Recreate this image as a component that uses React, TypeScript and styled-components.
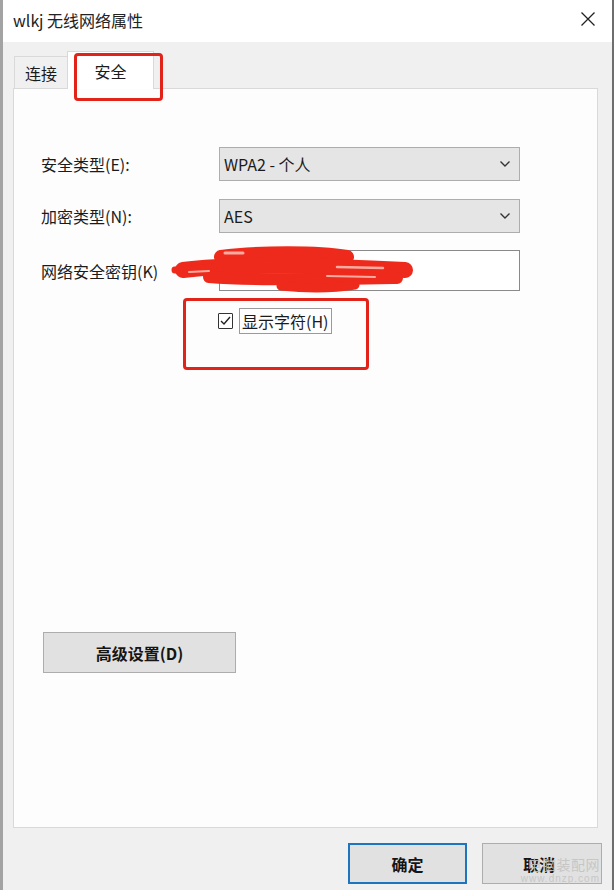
import React from "react";
import styled, { createGlobalStyle } from "styled-components";

const GlobalStyle = createGlobalStyle`
  html, body {
    margin: 0;
    padding: 0;
    background: #f0f0f0;
  }
  body {
    font-family: "Noto Sans CJK SC", "Noto Sans", sans-serif;
    color: #1b1b1b;
  }
  * {
    box-sizing: border-box;
  }
`;

const Window = styled.div`
  position: relative;
  width: 614px;
  height: 890px;
  display: flex;
  flex-direction: column;
  background: #f0f0f0;
  border-left: 3px solid #a3a3a3;
  border-right: 2px solid #6e6e6e;
  overflow: hidden;
`;

const TitleBar = styled.div`
  height: 42px;
  flex-shrink: 0;
  display: flex;
  align-items: center;
  justify-content: space-between;
  padding: 0 14px 2px 10px;
  background: #ffffff;
`;

const Title = styled.span`
  font-size: 16px;
  color: #222;
`;

const CloseButton = styled.div`
  width: 20px;
  height: 20px;
  display: flex;
  align-items: center;
  justify-content: center;
  margin-top: -2px;
`;

const Body = styled.div`
  flex: 1;
  display: flex;
  flex-direction: column;
  padding: 0 14px 0 10px;
`;

const TabRow = styled.div`
  height: 46px;
  display: flex;
  align-items: flex-end;
  padding-left: 1px;
`;

const Tab = styled.div<{ $active?: boolean }>`
  position: relative;
  z-index: ${(p) => (p.$active ? 2 : 1)};
  width: ${(p) => (p.$active ? "87px" : "54px")};
  height: ${(p) => (p.$active ? "38px" : "32px")};
  margin-bottom: ${(p) => (p.$active ? "-1px" : "0")};
  padding-top: ${(p) => (p.$active ? "9px" : "6px")};
  text-align: center;
  font-size: 16px;
  line-height: 20px;
  background: ${(p) => (p.$active ? "#ffffff" : "#f0f0f0")};
  border: 1px solid #d9d9d9;
  border-bottom: none;
  margin-right: ${(p) => (p.$active ? "0" : "-1px")};
`;

const Panel = styled.div`
  flex: 1;
  display: flex;
  flex-direction: column;
  background: #fdfdfd;
  border: 1px solid #d9d9d9;
  padding: 58px 0 154px 27px;
`;

const FormGrid = styled.div`
  display: grid;
  grid-template-columns: 178px 301px;
  grid-auto-rows: auto;
  row-gap: 18px;
  align-items: center;
`;

const Label = styled.label`
  font-size: 16px;
  line-height: 20px;
  white-space: nowrap;
`;

const SelectBox = styled.div`
  height: 34px;
  display: flex;
  align-items: center;
  justify-content: space-between;
  padding: 0 8px 0 4px;
  background: #e5e5e5;
  border: 1px solid #adadad;
  font-size: 16px;
`;

const TextBox = styled.div`
  height: 41px;
  margin-top: -1px;
  background: #ffffff;
  border: 1px solid #8a8a8a;
`;

const CheckRow = styled.div`
  grid-column: 2;
  display: flex;
  align-items: center;
  gap: 6px;
  margin-top: -1px;
  margin-left: -1px;
`;

const CheckBox = styled.div`
  width: 15px;
  height: 16px;
  border: 1.5px solid #333;
  border-radius: 1px;
  background: #fff;
  display: flex;
  align-items: center;
  justify-content: center;
`;

const FocusLabel = styled.span`
  height: 26px;
  padding: 0 3px 0 2px;
  display: flex;
  align-items: center;
  border: 1px solid #9a9a9a;
  font-size: 16px;
`;

const PushButton = styled.div<{ $primary?: boolean; $width: number }>`
  width: ${(p) => p.$width}px;
  height: 41px;
  display: flex;
  align-items: center;
  justify-content: center;
  background: #e1e1e1;
  border: ${(p) => (p.$primary ? "2px solid #1f74c0" : "1px solid #adadad")};
  font-size: 16px;
  font-weight: 700;
  color: #151515;
`;

const AdvancedButton = styled(PushButton)`
  margin-top: auto;
  margin-left: 2px;
`;

const CancelButton = styled(PushButton)`
  justify-content: flex-start;
  padding-left: 40px;
`;

const Footer = styled.div`
  height: 62px;
  flex-shrink: 0;
  display: flex;
  justify-content: flex-end;
  align-items: flex-start;
  gap: 15px;
  padding: 15px 10px 0 0;
  margin-right: -14px;
`;

const Annotation = styled.div<{ $x: number; $y: number; $w: number; $h: number }>`
  position: absolute;
  left: ${(p) => p.$x}px;
  top: ${(p) => p.$y}px;
  width: ${(p) => p.$w}px;
  height: ${(p) => p.$h}px;
  border: 3px solid #e2231a;
  border-radius: 4px;
  z-index: 5;
  pointer-events: none;
`;

const Scribble = styled.svg`
  position: absolute;
  left: 166px;
  top: 246px;
  z-index: 4;
`;

const Watermark = styled.div`
  position: absolute;
  right: 12px;
  bottom: 6px;
  z-index: 6;
  text-align: right;
  color: rgba(195, 195, 195, 0.9);
  line-height: 1;
`;

const WatermarkTitle = styled.div`
  font-size: 14px;
  letter-spacing: 0.5px;
  margin-bottom: 3px;
`;

const WatermarkUrl = styled.div`
  font-family: "Liberation Sans", sans-serif;
  font-size: 10px;
  letter-spacing: 1px;
`;

const Chevron = () => (
  <svg width="12" height="8" viewBox="0 0 12 8">
    <polyline points="1.5,1.5 6,6 10.5,1.5" fill="none" stroke="#333" strokeWidth="1.4" />
  </svg>
);

export default function App() {
  return (
    <>
      <GlobalStyle />
      <Window>
        <TitleBar>
          <Title>wlkj 无线网络属性</Title>
          <CloseButton>
            <svg width="16" height="16" viewBox="0 0 16 16">
              <path d="M1.5 1.5 L14.5 14.5 M14.5 1.5 L1.5 14.5" stroke="#222" strokeWidth="1.3" />
            </svg>
          </CloseButton>
        </TitleBar>
        <Body>
          <TabRow>
            <Tab>连接</Tab>
            <Tab $active>安全</Tab>
          </TabRow>
          <Panel>
            <FormGrid>
              <Label>安全类型(E):</Label>
              <SelectBox>
                <span>WPA2 - 个人</span>
                <Chevron />
              </SelectBox>
              <Label>加密类型(N):</Label>
              <SelectBox>
                <span>AES</span>
                <Chevron />
              </SelectBox>
              <Label>网络安全密钥(K)</Label>
              <TextBox />
              <CheckRow>
                <CheckBox>
                  <svg width="11" height="10" viewBox="0 0 11 10">
                    <polyline points="1,5 4,8 10,1" fill="none" stroke="#222" strokeWidth="1.4" />
                  </svg>
                </CheckBox>
                <FocusLabel>显示字符(H)</FocusLabel>
              </CheckRow>
            </FormGrid>
            <AdvancedButton $width={193}>高级设置(D)</AdvancedButton>
          </Panel>
          <Footer>
            <PushButton $primary $width={119}>确定</PushButton>
            <CancelButton $width={120}>取消</CancelButton>
          </Footer>
        </Body>

        <Annotation $x={71} $y={53} $w={89} $h={48} />
        <Annotation $x={180} $y={298} $w={186} $h={72} />

        <Scribble width="250" height="48" viewBox="0 0 250 48">
          <g stroke="#ee2a1c" strokeLinecap="round" strokeLinejoin="round" fill="none">
            <path d="M52 11 C 90 6, 150 6, 178 11" strokeWidth="14" />
            <path d="M14 24 C 60 18, 150 19, 236 24" strokeWidth="16" />
            <path d="M40 31 C 90 35, 180 33, 228 32" strokeWidth="12" />
            <path d="M112 40 C 140 43, 168 42, 186 39" strokeWidth="9" />
            <path d="M6 24 L 44 21" strokeWidth="7" />
          </g>
          <g stroke="#ffc2b8" strokeLinecap="round" fill="none" opacity="0.85">
            <path d="M56 7 L 74 7" strokeWidth="3" />
            <path d="M168 21 L 214 22" strokeWidth="2.5" />
            <path d="M158 30 L 206 31" strokeWidth="2" />
            <path d="M20 26 L 40 25" strokeWidth="2" />
          </g>
        </Scribble>

        <Watermark>
          <WatermarkTitle>电脑装配网</WatermarkTitle>
          <WatermarkUrl>www.dnzp.com</WatermarkUrl>
        </Watermark>
      </Window>
    </>
  );
}
